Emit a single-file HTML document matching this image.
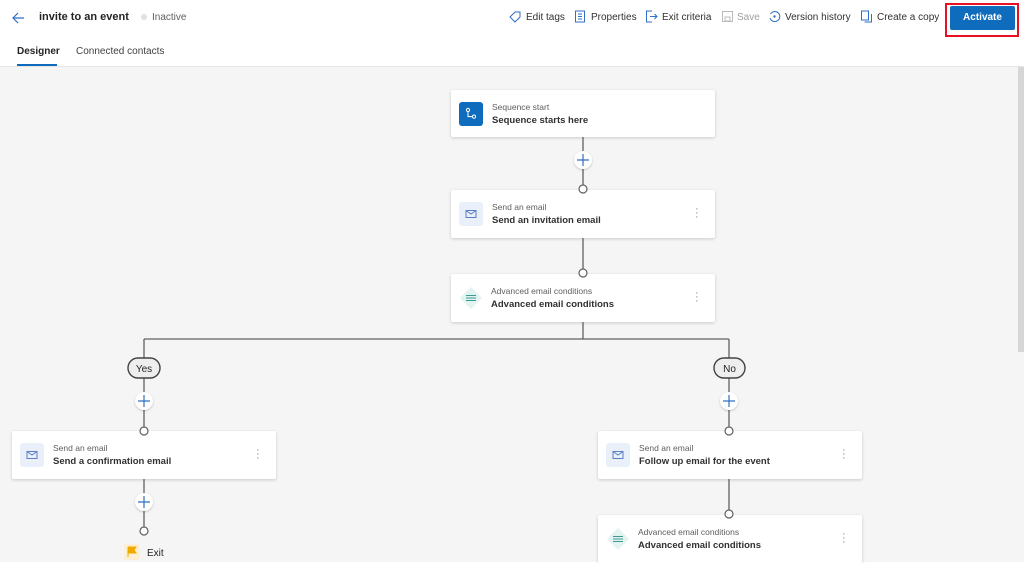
<!DOCTYPE html>
<html><head><meta charset="utf-8"><style>
*{box-sizing:border-box;margin:0;padding:0}
body{width:1024px;height:562px;overflow:hidden;font-family:"Liberation Sans",sans-serif;background:#fff;position:relative;color:#242424}
.top{position:absolute;left:0;top:0;width:1024px;height:67px;background:#fff;border-bottom:1px solid #e6e6e6}
.canvas{position:absolute;left:0;top:67px;width:1024px;height:495px;background:#f5f5f5}
.t{position:absolute;white-space:nowrap}
.card{position:absolute;width:264px;height:48px;background:#fff;box-shadow:0 1px 3px rgba(0,0,0,.18);border-radius:2px}
.card .ic{position:absolute;left:8px;top:12px;width:24px;height:24px;border-radius:3px;background:#eaf0fa}
.card .s{position:absolute;left:41px;top:12px;font-size:8.5px;color:#605e5c}
.card .m{position:absolute;left:41px;top:25px;font-size:9.5px;font-weight:bold;color:#323130}
.card .d{position:absolute;right:17px;top:17px;font-size:11px;color:#8a8886;line-height:4px;width:3px;text-align:center}
.tb{position:absolute;top:12px;font-size:10px;color:#323130}
</style></head><body>
<div class="top">
<svg style="position:absolute;left:11px;top:11px" width="14" height="14" viewBox="0 0 14 14"><path d="M13 7H2M7 2L2 7l5 5" stroke="#2f6fc4" stroke-width="1.2" fill="none"/></svg>
<div class="t" style="left:39px;top:11px;font-size:11px;font-weight:bold">invite to an event</div>
<div style="position:absolute;left:141px;top:14px;width:6px;height:6px;border-radius:50%;background:#e1e1e1"></div>
<div class="t" style="left:152px;top:12px;font-size:10px;color:#605e5c">Inactive</div>
<div class="t" style="left:17px;top:46px;font-size:10px;font-weight:bold">Designer</div>
<div style="position:absolute;left:17px;top:64px;width:40px;height:2px;background:#0f6cbd"></div>
<div class="t" style="left:76px;top:46px;font-size:10px;color:#424242">Connected contacts</div>
<svg style="position:absolute;left:509px;top:11px" width="12" height="12"><path d="M1 6l5-5h5v5l-5 5z" stroke="#2f6fc4" fill="none"/></svg>
<div class="tb" style="left:526px">Edit tags</div>
<svg style="position:absolute;left:574px;top:10px" width="12" height="13"><rect x="1.5" y="1" width="9" height="11" stroke="#2f6fc4" fill="none"/><path d="M4 4h4M4 6.5h4M4 9h4" stroke="#2f6fc4"/></svg>
<div class="tb" style="left:591px">Properties</div>
<svg style="position:absolute;left:645px;top:10px" width="13" height="13"><path d="M7 1H1.5v11H7M5 6.5h7M9.5 4l2.5 2.5L9.5 9" stroke="#2f6fc4" fill="none"/></svg>
<div class="tb" style="left:662px">Exit criteria</div>
<svg style="position:absolute;left:721px;top:10px" width="13" height="13"><rect x="1.5" y="1.5" width="10" height="10" stroke="#bbb" fill="none"/><rect x="4" y="7" width="5" height="4" stroke="#bbb" fill="none"/></svg>
<div class="tb" style="left:737px;color:#a19f9d">Save</div>
<svg style="position:absolute;left:768px;top:10px" width="13" height="13"><path d="M2.5 4A5 5 0 1 1 2 8" stroke="#2f6fc4" fill="none"/><circle cx="6.5" cy="6.5" r="1.2" fill="#2f6fc4"/></svg>
<div class="tb" style="left:785px">Version history</div>
<svg style="position:absolute;left:860px;top:10px" width="13" height="13"><rect x="1.5" y="1" width="7" height="9" stroke="#2f6fc4" fill="none"/><path d="M4.5 12h7V4" stroke="#2f6fc4" fill="none"/></svg>
<div class="tb" style="left:877px">Create a copy</div>
<div style="position:absolute;left:945px;top:3px;width:74px;height:34px;border:2px solid #e81123"></div>
<div style="position:absolute;left:950px;top:6px;width:65px;height:24px;background:#0f6cbd;border-radius:2px;color:#fff;font-size:10px;font-weight:bold;text-align:center;line-height:24px">Activate</div>
</div>
<div class="canvas"></div>
<div style="position:absolute;left:1018px;top:67px;width:6px;height:285px;background:#d6d6d6"></div>
<div class="card" style="left:451px;top:90px;height:47px"><div class="ic" style="background:#0f6cbd"><svg width="24" height="24"><circle cx="9" cy="8" r="1.6" stroke="#fff" fill="none"/><path d="M9 9.6v5h4" stroke="#fff" fill="none"/><circle cx="15" cy="14.6" r="1.6" stroke="#fff" fill="none"/></svg></div><div class="s">Sequence start</div><div class="m">Sequence starts here</div></div>
<div class="card" style="left:451px;top:190px"><div class="ic"><svg width="24" height="24"><rect x="7" y="8.5" width="10" height="7" stroke="#5b7fc7" fill="none"/><path d="M7 8.5l5 3.5 5-3.5" stroke="#5b7fc7" fill="none"/></svg></div><div class="s">Send an email</div><div class="m">Send an invitation email</div><div class="d">·<br>·<br>·</div></div>
<div class="card" style="left:451px;top:274px"><div class="ic" style="background:none"><svg width="24" height="24"><path d="M12 1l11 11-11 11L1 12z" fill="#e3f3f1"/><path d="M7 9.5h10M7 12h10M7 14.5h10" stroke="#3a9a8f"/></svg></div><div class="s" style="left:40px">Advanced email conditions</div><div class="m" style="left:40px">Advanced email conditions</div><div class="d">·<br>·<br>·</div></div>
<div class="card" style="left:12px;top:431px"><div class="ic"><svg width="24" height="24"><rect x="7" y="8.5" width="10" height="7" stroke="#5b7fc7" fill="none"/><path d="M7 8.5l5 3.5 5-3.5" stroke="#5b7fc7" fill="none"/></svg></div><div class="s">Send an email</div><div class="m">Send a confirmation email</div><div class="d">·<br>·<br>·</div></div>
<div class="card" style="left:598px;top:431px"><div class="ic"><svg width="24" height="24"><rect x="7" y="8.5" width="10" height="7" stroke="#5b7fc7" fill="none"/><path d="M7 8.5l5 3.5 5-3.5" stroke="#5b7fc7" fill="none"/></svg></div><div class="s">Send an email</div><div class="m">Follow up email for the event</div><div class="d">·<br>·<br>·</div></div>
<div class="card" style="left:598px;top:515px"><div class="ic" style="background:none"><svg width="24" height="24"><path d="M12 1l11 11-11 11L1 12z" fill="#e3f3f1"/><path d="M7 9.5h10M7 12h10M7 14.5h10" stroke="#3a9a8f"/></svg></div><div class="s" style="left:40px">Advanced email conditions</div><div class="m" style="left:40px">Advanced email conditions</div><div class="d">·<br>·<br>·</div></div>
<svg style="position:absolute;left:0;top:0" width="1024" height="562">
<g stroke="#616161" stroke-width="1.3" fill="none">
<path d="M583 137V185M583 238V269M583 322V339M144 339H729M144 339V358M729 339V358M144 378V427M729 378V427M144 479V527M729 479V510"/>
</g>
<g fill="#fff" stroke="#616161" stroke-width="1.2">
<circle cx="583" cy="189" r="4"/><circle cx="583" cy="273" r="4"/><circle cx="144" cy="431" r="4"/><circle cx="729" cy="431" r="4"/><circle cx="144" cy="531" r="4"/><circle cx="729" cy="514" r="4"/>
</g>
<g fill="#fff" style="filter:drop-shadow(0 1px 1px rgba(0,0,0,.2))">
<circle cx="583" cy="160" r="9"/><circle cx="144" cy="401" r="9"/><circle cx="729" cy="401" r="9"/><circle cx="144" cy="502" r="9"/>
</g>
<g stroke="#2f6fc4" stroke-width="1.2">
<path d="M577 160h12M583 154v12M138 401h12M144 395v12M723 401h12M729 395v12M138 502h12M144 496v12"/>
</g>
<rect x="128" y="358" width="32" height="20" rx="10" fill="#eee" stroke="#424242" stroke-width="1.4"/>
<text x="144" y="372" font-size="10" text-anchor="middle" fill="#242424" font-family="Liberation Sans">Yes</text>
<rect x="714" y="358" width="31" height="20" rx="10" fill="#eee" stroke="#424242" stroke-width="1.4"/>
<text x="729.5" y="372" font-size="10" text-anchor="middle" fill="#242424" font-family="Liberation Sans">No</text>
<rect x="124" y="544" width="16" height="16" rx="2" fill="#fdefd3"/>
<path d="M128 547v10M128 547h8l-2 3 2 3h-8" fill="#f2a900" stroke="#f2a900"/>
<text x="147" y="556" font-size="10" fill="#242424" font-family="Liberation Sans">Exit</text>
</svg>
</body></html>
